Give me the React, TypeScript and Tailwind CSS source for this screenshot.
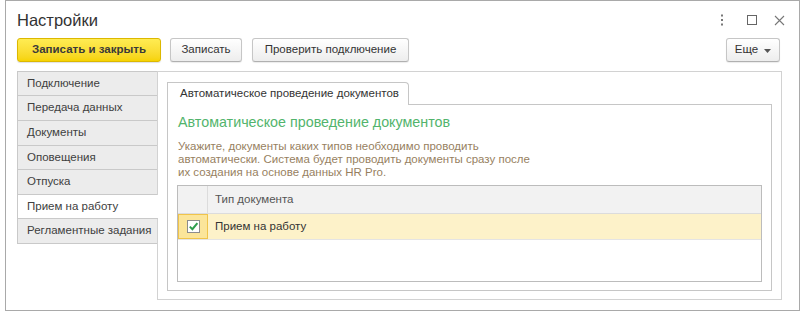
import React from "react";

const items: { label: string; h: string; selected?: boolean }[] = [
  { label: "Подключение", h: "h-[25px]" },
  { label: "Передача данных", h: "h-[25px]" },
  { label: "Документы", h: "h-[25px]" },
  { label: "Оповещения", h: "h-[24px]" },
  { label: "Отпуска", h: "h-[25px]" },
  { label: "Прием на работу", h: "h-[24px]", selected: true },
  { label: "Регламентные задания", h: "h-[25px]" },
];

function Btn({ children, w }: { children: React.ReactNode; w: string }) {
  return (
    <div
      className={`${w} h-[24px] flex items-center justify-center rounded-[3px] border border-[#c6c6c6] border-b-[#b0b0b0] bg-gradient-to-b from-white to-[#ededed] text-[11.5px] text-[#333] shadow-[0_1px_1px_rgba(0,0,0,0.08)]`}
    >
      {children}
    </div>
  );
}

export default function App() {
  return (
    <div className="w-[804px] h-[316px] bg-white font-[family-name:Liberation_Sans,Arial,sans-serif] text-[#333]">
      <div className="ml-[5px] w-[795px] h-[311px] border border-[#a9a9a9] flex flex-col pl-[11px] pr-[17px]">
        {/* Title row */}
        <div className="flex items-start pt-[9px] h-[29px]">
          <div className="text-[16.5px] leading-[20px] text-[#333]">Настройки</div>
          <div className="ml-auto flex items-center h-[20px] mr-[-3px] text-[#777]">
            <svg width="4" height="12" viewBox="0 0 4 12" className="mr-[23px]">
              <rect x="1" y="0.5" width="2" height="2" fill="#777" />
              <rect x="1" y="5" width="2" height="2" fill="#777" />
              <rect x="1" y="9.5" width="2" height="2" fill="#777" />
            </svg>
            <svg width="10" height="10" viewBox="0 0 10 10" className="mr-[17px]">
              <rect x="0.5" y="0.5" width="9" height="9" fill="none" stroke="#666" strokeWidth="1" />
            </svg>
            <svg width="11" height="11" viewBox="0 0 11 11">
              <path d="M1 1 L10 10 M10 1 L1 10" stroke="#777" strokeWidth="1.1" />
            </svg>
          </div>
        </div>

        {/* Buttons */}
        <div className="flex items-center mt-[8px] pr-[2px]">
          <div className="w-[144px] h-[24px] flex items-center justify-center rounded-[3px] border border-[#dcb800] bg-gradient-to-b from-[#ffec52] to-[#f6d300] text-[11.5px] font-bold text-[#3a3a3a] shadow-[0_1px_1px_rgba(0,0,0,0.12)]">
            Записать и закрыть
          </div>
          <div className="ml-[9px]">
            <Btn w="w-[72px]">Записать</Btn>
          </div>
          <div className="ml-[10px]">
            <Btn w="w-[157px]">Проверить подключение</Btn>
          </div>
          <div className="ml-auto">
            <Btn w="w-[54px]">
              <span>Еще</span>
              <svg width="7" height="4" viewBox="0 0 7 4" className="ml-[6px] mt-[1px]">
                <path d="M0 0 L7 0 L3.5 4 Z" fill="#555" />
              </svg>
            </Btn>
          </div>
        </div>

        {/* Body */}
        <div className="flex mt-[9px]">
          <div className="w-[140px] flex flex-col relative z-10">
            {items.map((it, i) => (
              <div
                key={it.label}
                className={`${it.h} flex items-center pl-[9px] text-[11.5px] text-[#404040] border-l border-b border-[#c9c9c9] ${
                  i === 0 ? "border-t" : ""
                } ${it.selected ? "w-[141px] bg-white" : "w-[140px] bg-[#ececec]"}`}
              >
                {it.label}
              </div>
            ))}
          </div>
          <div className="flex-1 h-[229px] border border-[#d2d2d2] pl-[9px] pt-[10px] pr-[9px] pb-[8px] flex flex-col">
            <div className="flex">
              <div className="w-[242px] h-[23px] mb-[-1px] relative z-10 bg-white border-t border-l border-r border-[#c6c6c6] rounded-tr-[4px] flex items-center pl-[12px] text-[11.5px] text-[#333] whitespace-nowrap">
                Автоматическое проведение документов
              </div>
            </div>
            <div className="flex-1 border border-[#c6c6c6] pl-[9px] pr-[9px] pt-[8px] pb-[8px] flex flex-col">
              <div className="ml-[1px] text-[14.3px] leading-[18px] text-[#52b46c] whitespace-nowrap">
                Автоматическое проведение документов
              </div>
              <div className="ml-[1px] mt-[9px] text-[11.5px] leading-[13px] text-[#977f5f] whitespace-nowrap">
                Укажите, документы каких типов необходимо проводить
                <br />
                автоматически. Система будет проводить документы сразу после
                <br />
                их создания на основе данных HR Pro.
              </div>
              <div className="mt-[6px] flex-1 border border-[#bcbcbc] flex flex-col">
                <div className="h-[28px] flex bg-[#f2f2f2] border-b border-[#dcdcdc]">
                  <div className="w-[30px] border-r border-[#dcdcdc]" />
                  <div className="flex items-center pl-[7px] text-[11.5px] text-[#555]">Тип документа</div>
                </div>
                <div className="h-[26px] flex bg-[#fdf2c9] border-b border-[#e4e4e4]">
                  <div className="w-[30px] h-[25px] bg-[#fbe59a] border border-[#f0c44a] flex items-center justify-center">
                    <svg width="13" height="13" viewBox="0 0 13 13">
                      <rect x="0.5" y="0.5" width="12" height="12" fill="#fff" stroke="#8c8c8c" />
                      <path d="M2.8 6.6 L5.4 9.2 L10.4 3.2" fill="none" stroke="#2f9e4e" strokeWidth="2" />
                    </svg>
                  </div>
                  <div className="flex items-center pl-[7px] text-[11.5px] text-[#333]">Прием на работу</div>
                </div>
                <div className="flex-1 bg-white" />
              </div>
            </div>
          </div>
        </div>
      </div>
    </div>
  );
}
